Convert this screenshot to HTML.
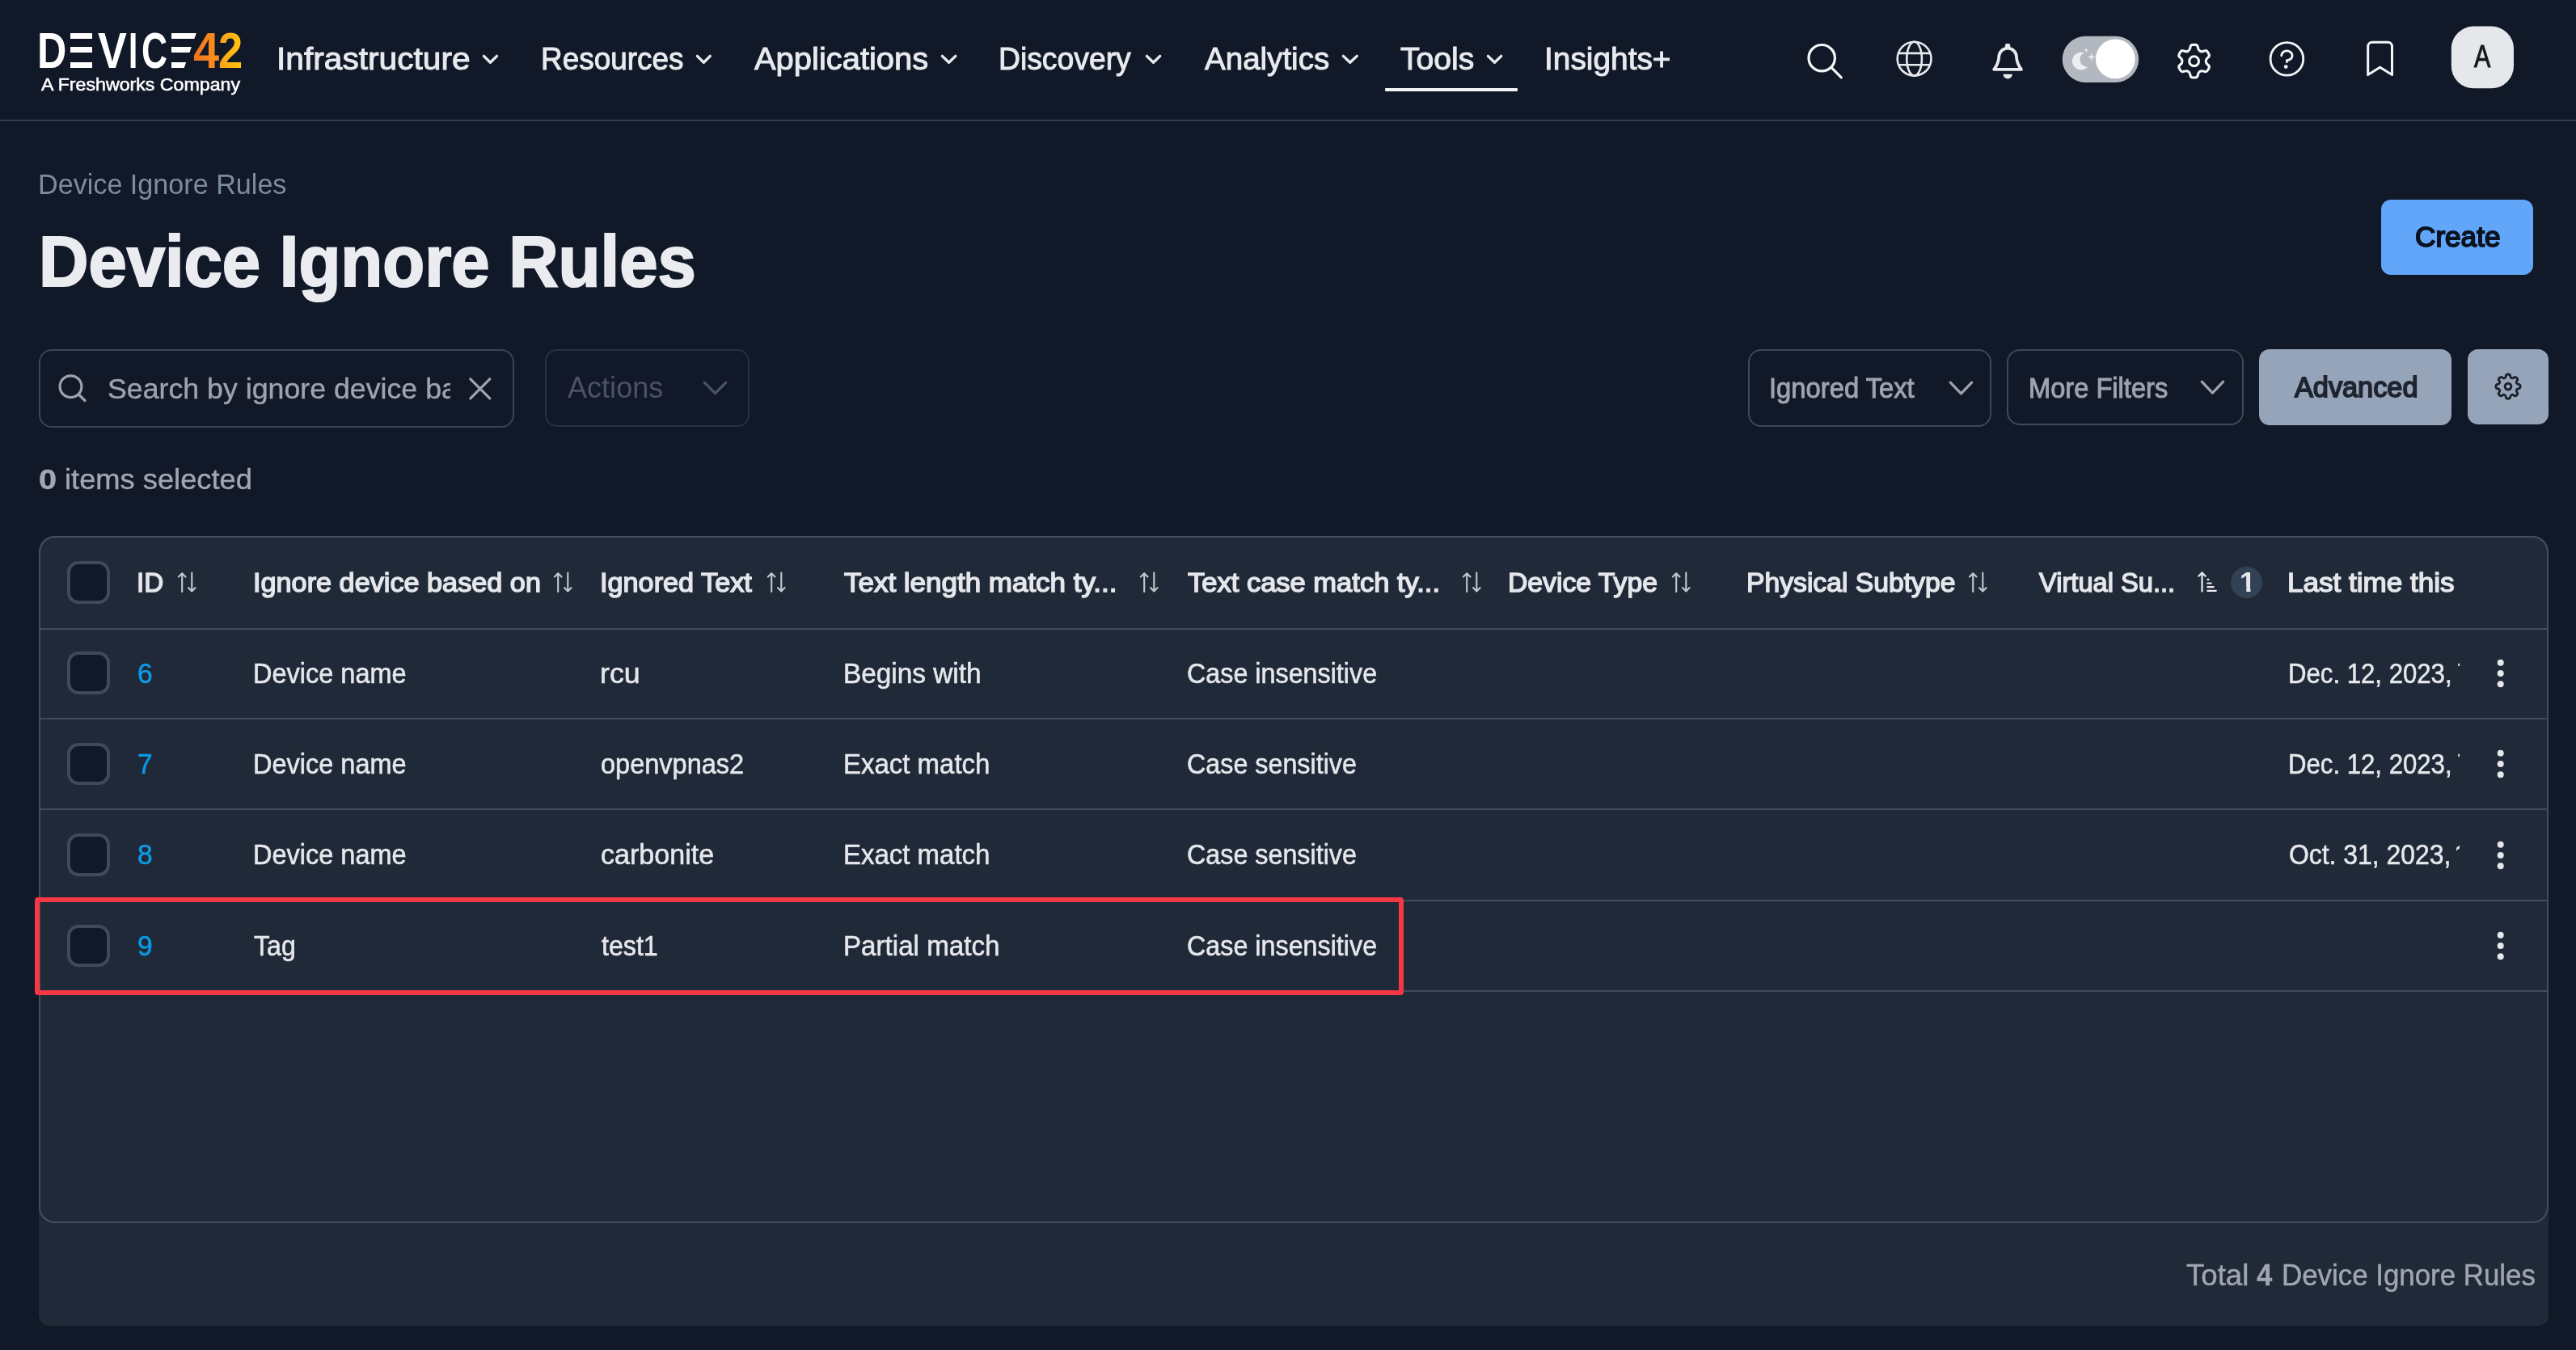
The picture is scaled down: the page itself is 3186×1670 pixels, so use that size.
<!DOCTYPE html>
<html lang="en"><head><meta charset="utf-8"><title>Device Ignore Rules</title>
<style>
html,body{margin:0;padding:0;background:#111827;}
body{width:3186px;height:1670px;position:relative;overflow:hidden;font-family:"Liberation Sans",sans-serif;}
.b{position:absolute;display:block;}
.t{position:absolute;white-space:nowrap;transform-origin:0 50%;}
.clip{position:absolute;overflow:hidden;}
</style>
<script>(function(){var w=window.innerWidth;if(w&&Math.abs(w-3186)>2){document.documentElement.style.zoom=w/3186;}})();</script>
</head><body>
<div class="b" style="left:0px;top:148px;width:3186px;height:2.2px;background:#363d4c"></div>
<div class="b" style="left:1712.8px;top:108.8px;width:164.4px;height:4.2px;background:#f3f4f6;border-radius:1px"></div>
<svg class="b" style="left:595.3px;top:66.39999999999999px" width="22.9" height="15.200000000000012" viewBox="-2.2 -2.2 22.9 15.200000000000012"><polyline points="1.19,1.19 9.25,9.10 17.31,1.19" fill="none" stroke="#e8eaee" stroke-width="3.4" stroke-linecap="round" stroke-linejoin="round"/></svg>
<svg class="b" style="left:858.8px;top:66.39999999999999px" width="22.699999999999953" height="15.200000000000012" viewBox="-2.2 -2.2 22.699999999999953 15.200000000000012"><polyline points="1.19,1.19 9.15,9.10 17.11,1.19" fill="none" stroke="#e8eaee" stroke-width="3.4" stroke-linecap="round" stroke-linejoin="round"/></svg>
<svg class="b" style="left:1161.6px;top:66.39999999999999px" width="23.199999999999953" height="15.200000000000012" viewBox="-2.2 -2.2 23.199999999999953 15.200000000000012"><polyline points="1.19,1.19 9.40,9.10 17.61,1.19" fill="none" stroke="#e8eaee" stroke-width="3.4" stroke-linecap="round" stroke-linejoin="round"/></svg>
<svg class="b" style="left:1415.1px;top:66.39999999999999px" width="23.100000000000044" height="15.200000000000012" viewBox="-2.2 -2.2 23.100000000000044 15.200000000000012"><polyline points="1.19,1.19 9.35,9.10 17.51,1.19" fill="none" stroke="#e8eaee" stroke-width="3.4" stroke-linecap="round" stroke-linejoin="round"/></svg>
<svg class="b" style="left:1658.0px;top:66.39999999999999px" width="23.600000000000044" height="15.200000000000012" viewBox="-2.2 -2.2 23.600000000000044 15.200000000000012"><polyline points="1.19,1.19 9.60,9.10 18.01,1.19" fill="none" stroke="#e8eaee" stroke-width="3.4" stroke-linecap="round" stroke-linejoin="round"/></svg>
<svg class="b" style="left:1837.1px;top:66.39999999999999px" width="23.100000000000044" height="15.200000000000012" viewBox="-2.2 -2.2 23.100000000000044 15.200000000000012"><polyline points="1.19,1.19 9.35,9.10 17.51,1.19" fill="none" stroke="#e8eaee" stroke-width="3.4" stroke-linecap="round" stroke-linejoin="round"/></svg>
<div class="b" style="left:0;top:0;width:320px;height:130px;font-weight:700;color:#fff"><span class="t" style="left:46.17px;top:22.70px;font-size:62.3px;line-height:80px;transform:scaleX(0.8077);">D</span><span class="clip" style="left:87.20px;top:22.70px;width:26.70px;height:80px;"><span class="t" style="left:-16.48px;top:0;font-size:62.3px;line-height:80px;transform:scaleX(1.2027)">E</span></span><span class="t" style="left:120.70px;top:22.70px;font-size:62.3px;line-height:80px;transform:scaleX(0.8619);">V</span><span class="t" style="left:159.00px;top:22.70px;font-size:62.3px;line-height:80px;transform:scaleX(0.6500);">I</span><span class="t" style="left:174.88px;top:22.70px;font-size:62.3px;line-height:80px;transform:scaleX(0.7095);">C</span><span class="clip" style="left:211.90px;top:22.70px;width:34.10px;height:80px;clip-path:polygon(0.00px 7.30px,34.80px 7.30px,15.10px 63.30px,0.00px 63.30px);"><span class="t" style="left:-21.04px;top:0;font-size:62.3px;line-height:80px;transform:scaleX(1.5360)">E</span></span><span class="t" style="left:238.60px;top:22.40px;font-size:63.199999999999996px;line-height:80px;transform:scaleX(0.9143);background:linear-gradient(90deg,#f2701f 0%,#f7941d 100%);-webkit-background-clip:text;background-clip:text;color:transparent;">4</span><span class="t" style="left:270.48px;top:22.40px;font-size:63.199999999999996px;line-height:80px;transform:scaleX(0.8613);background:linear-gradient(90deg,#f9a01b 0%,#ffc60f 100%);-webkit-background-clip:text;background-clip:text;color:transparent;">2</span></div>
<div class="b" style="left:2945px;top:247px;width:188px;height:93.3px;background:#62a6fa;border-radius:12px"></div>
<div class="b" style="left:48px;top:431.5px;width:588px;height:97.5px;border:2px solid #3a4555;border-radius:16px;box-sizing:border-box"></div>
<div class="b" style="left:674px;top:432px;width:253.2px;height:96px;border:2px solid #283142;border-radius:15px;box-sizing:border-box"></div>
<div class="b" style="left:2162px;top:432px;width:301.4px;height:96px;border:2px solid #3e4857;border-radius:16px;box-sizing:border-box"></div>
<div class="b" style="left:2482px;top:432px;width:293.3px;height:94px;border:2px solid #3e4857;border-radius:16px;box-sizing:border-box"></div>
<div class="b" style="left:2794px;top:432px;width:238px;height:94.2px;background:#96a4b9;border-radius:13px"></div>
<div class="b" style="left:3052px;top:432px;width:100px;height:93px;background:#96a4b9;border-radius:13px"></div>
<svg class="b" style="left:868.1999999999999px;top:469.9px" width="33.100000000000094" height="20.399999999999988" viewBox="-2.1 -2.1 33.100000000000094 20.399999999999988"><polyline points="1.12,1.12 14.45,14.60 27.78,1.12" fill="none" stroke="#4b5263" stroke-width="3.2" stroke-linecap="round" stroke-linejoin="round"/></svg>
<svg class="b" style="left:2408.6px;top:469.59999999999997px" width="32.900000000000276" height="20.50000000000001" viewBox="-2.1 -2.1 32.900000000000276 20.50000000000001"><polyline points="1.12,1.12 14.35,14.70 27.58,1.12" fill="none" stroke="#9ea3af" stroke-width="3.2" stroke-linecap="round" stroke-linejoin="round"/></svg>
<svg class="b" style="left:2720.2000000000003px;top:468.9px" width="32.89999999999982" height="20.800000000000022" viewBox="-2.1 -2.1 32.89999999999982 20.800000000000022"><polyline points="1.12,1.12 14.35,15.00 27.58,1.12" fill="none" stroke="#9ea3af" stroke-width="3.2" stroke-linecap="round" stroke-linejoin="round"/></svg>
<svg class="b" style="left:2200px;top:0" width="986" height="147" viewBox="2200 0 986 147">
<g fill="none" stroke="#f4f5f7" stroke-width="3.2" stroke-linecap="round" stroke-linejoin="round">
<circle cx="2253.2" cy="71.7" r="16.2"/><path d="M2264.9 83.4 L2277.3 95.8"/>
</g>
<g fill="none" stroke="#e8eaee" stroke-width="2.6">
<circle cx="2367.6" cy="72.7" r="20.9"/><ellipse cx="2367.6" cy="72.7" rx="9.3" ry="20.9"/>
<path d="M2347.9 65.9 H2387.3 M2348.1 80.2 H2387.1"/>
</g>
<g fill="none" stroke="#e8eaee" stroke-width="3.7" stroke-linejoin="round" stroke-linecap="round">
<path d="M2466.2 85.9 C2470.2 80.5 2472 75 2472.2 70.6 A10.9 10.9 0 0 1 2494 70.6 C2494.2 75 2496 80.5 2500 85.9 Z"/>
</g>
<circle cx="2483.1" cy="57" r="3.3" fill="#e8eaee"/>
<path d="M2477.5 91.8 A5.7 5.7 0 0 0 2488.9 91.8 Z" fill="#e8eaee"/>
<rect x="2550.7" y="44.8" width="94.4" height="57.1" rx="28.55" fill="#b2b7c0"/>
<circle cx="2616.3" cy="72.9" r="24.4" fill="#ffffff"/>
<path d="M2577.5 65.2 A11 11 0 1 0 2582.4 82.6 A9.2 9.2 0 0 1 2577.5 65.2 Z" fill="#eceef2"/>
<path d="M2580.20 58.50 L2579.49 61.39 L2576.60 62.10 L2579.49 62.81 L2580.20 65.70 L2580.91 62.81 L2583.80 62.10 L2580.91 61.39 Z" fill="#eceef2"/>
<path d="M2586.80 64.70 L2585.69 69.19 L2581.20 70.30 L2585.69 71.41 L2586.80 75.90 L2587.91 71.41 L2592.40 70.30 L2587.91 69.19 Z" fill="#eceef2"/>
<g fill="none" stroke="#f4f5f7" stroke-width="3.1" stroke-linejoin="round">
<path d="M2720.91 63.04 Q2718.90 61.88 2718.42 59.24 L2718.21 58.06 Q2717.73 55.42 2715.04 55.42 L2712.16 55.42 Q2709.47 55.42 2708.99 58.06 L2708.78 59.24 Q2708.30 61.88 2706.29 63.04 L2706.29 63.04 Q2704.29 64.20 2701.75 63.29 L2700.63 62.89 Q2698.10 61.98 2696.75 64.31 L2695.32 66.80 Q2693.97 69.13 2696.02 70.87 L2696.93 71.64 Q2698.98 73.38 2698.98 75.70 L2698.98 75.70 Q2698.98 78.02 2696.93 79.76 L2696.02 80.53 Q2693.97 82.27 2695.32 84.60 L2696.75 87.09 Q2698.10 89.42 2700.63 88.51 L2701.75 88.11 Q2704.29 87.20 2706.29 88.36 L2706.29 88.36 Q2708.30 89.52 2708.78 92.16 L2708.99 93.34 Q2709.47 95.98 2712.16 95.98 L2715.04 95.98 Q2717.73 95.98 2718.21 93.34 L2718.42 92.16 Q2718.90 89.52 2720.91 88.36 L2720.91 88.36 Q2722.91 87.20 2725.45 88.11 L2726.57 88.51 Q2729.10 89.42 2730.45 87.09 L2731.88 84.60 Q2733.23 82.27 2731.18 80.53 L2730.27 79.76 Q2728.22 78.02 2728.22 75.70 L2728.22 75.70 Q2728.22 73.38 2730.27 71.64 L2731.18 70.87 Q2733.23 69.13 2731.88 66.80 L2730.45 64.31 Q2729.10 61.98 2726.57 62.89 L2725.45 63.29 Q2722.91 64.20 2720.91 63.04 Z"/><circle cx="2713.6" cy="75.7" r="5.9"/>
</g>
<g fill="none" stroke="#f4f5f7" stroke-width="2.8" stroke-linecap="round" stroke-linejoin="round">
<circle cx="2828.4" cy="72.9" r="20.3"/>
<path d="M2828.40 76.66 V74.57 C2832.16 74.57 2835.08 71.96 2835.08 68.73 S2832.09 62.88 2828.40 62.88 S2821.72 65.49 2821.72 68.73"/>
</g>
<circle cx="2827.2000000000003" cy="82.6" r="2.4" fill="#f4f5f7"/>
<g fill="none" stroke="#f4f5f7" stroke-width="3" stroke-linejoin="round" stroke-linecap="round">
<path d="M2928.7 92.6 V57.3 A5 5 0 0 1 2933.7 52.3 H2953.5 A5 5 0 0 1 2958.5 57.3 V92.6 L2943.6 83.2 Z"/>
</g>
<rect x="3031.8" y="32.6" width="77.2" height="76.7" rx="27.5" fill="#e5e7eb"/>
</svg>
<svg class="b" style="left:60px;top:450px" width="560" height="60" viewBox="60 450 560 60">
<g fill="none" stroke="#9ea3af" stroke-width="3.2" stroke-linecap="round">
<circle cx="87.5" cy="478.2" r="13.4"/><path d="M97.3 488 L105 495.5"/>
<path d="M581.8 468.8 L605.8 492.8 M605.8 468.8 L581.8 492.8"/>
</g></svg>
<svg class="b" style="left:3080px;top:455px" width="46" height="46" viewBox="3080 455 46 46">
<g fill="none" stroke="#1c222c" stroke-width="2.9" stroke-linejoin="round">
<path d="M3106.32 467.67 Q3104.85 467.06 3104.69 465.04 L3104.69 465.04 Q3104.53 463.01 3102.00 463.01 L3102.00 463.01 Q3099.47 463.01 3099.31 465.04 L3099.31 465.04 Q3099.15 467.06 3097.68 467.67 L3097.68 467.67 Q3096.21 468.28 3094.66 466.96 L3094.66 466.96 Q3093.12 465.64 3091.33 467.43 L3091.33 467.43 Q3089.54 469.22 3090.86 470.76 L3090.86 470.76 Q3092.18 472.31 3091.57 473.78 L3091.57 473.78 Q3090.96 475.25 3088.94 475.41 L3088.94 475.41 Q3086.91 475.57 3086.91 478.10 L3086.91 478.10 Q3086.91 480.63 3088.94 480.79 L3088.94 480.79 Q3090.96 480.95 3091.57 482.42 L3091.57 482.42 Q3092.18 483.89 3090.86 485.44 L3090.86 485.44 Q3089.54 486.98 3091.33 488.77 L3091.33 488.77 Q3093.12 490.56 3094.66 489.24 L3094.66 489.24 Q3096.21 487.92 3097.68 488.53 L3097.68 488.53 Q3099.15 489.14 3099.31 491.16 L3099.31 491.16 Q3099.47 493.19 3102.00 493.19 L3102.00 493.19 Q3104.53 493.19 3104.69 491.16 L3104.69 491.16 Q3104.85 489.14 3106.32 488.53 L3106.32 488.53 Q3107.79 487.92 3109.34 489.24 L3109.34 489.24 Q3110.88 490.56 3112.67 488.77 L3112.67 488.77 Q3114.46 486.98 3113.14 485.44 L3113.14 485.44 Q3111.82 483.89 3112.43 482.42 L3112.43 482.42 Q3113.04 480.95 3115.06 480.79 L3115.06 480.79 Q3117.09 480.63 3117.09 478.10 L3117.09 478.10 Q3117.09 475.57 3115.06 475.41 L3115.06 475.41 Q3113.04 475.25 3112.43 473.78 L3112.43 473.78 Q3111.82 472.31 3113.14 470.76 L3113.14 470.76 Q3114.46 469.22 3112.67 467.43 L3112.67 467.43 Q3110.88 465.64 3109.34 466.96 L3109.34 466.96 Q3107.79 468.28 3106.32 467.67 Z"/><circle cx="3102" cy="478.1" r="3.9"/>
</g></svg>
<div class="b" style="left:48px;top:663px;width:3104px;height:976.5px;background:#1f2937;border-radius:20px 20px 13px 13px"></div>
<div class="b" style="left:48px;top:663px;width:3104px;height:849.5px;border:2px solid #444e5d;border-radius:20px;box-sizing:border-box"></div>
<div class="b" style="left:50px;top:776.6px;width:3100px;height:2px;background:#414b5a"></div>
<div class="b" style="left:50px;top:888.3px;width:3100px;height:2px;background:#414b5a"></div>
<div class="b" style="left:50px;top:1000.3px;width:3100px;height:2px;background:#414b5a"></div>
<div class="b" style="left:50px;top:1112.7px;width:3100px;height:2px;background:#414b5a"></div>
<div class="b" style="left:50px;top:1224.7px;width:3100px;height:2px;background:#414b5a"></div>
<div class="b" style="left:83.3px;top:694.3px;width:52.4px;height:52.4px;background:#111827;border:4px solid #3f4959;border-radius:14px;box-sizing:border-box"></div>
<div class="b" style="left:83.3px;top:806.3px;width:52.4px;height:52.4px;background:#111827;border:4px solid #3f4959;border-radius:14px;box-sizing:border-box"></div>
<div class="b" style="left:83.3px;top:918.8px;width:52.4px;height:52.4px;background:#111827;border:4px solid #3f4959;border-radius:14px;box-sizing:border-box"></div>
<div class="b" style="left:83.3px;top:1031.3px;width:52.4px;height:52.4px;background:#111827;border:4px solid #3f4959;border-radius:14px;box-sizing:border-box"></div>
<div class="b" style="left:83.3px;top:1143.8px;width:52.4px;height:52.4px;background:#111827;border:4px solid #3f4959;border-radius:14px;box-sizing:border-box"></div>
<div class="b" style="left:2759px;top:700.6px;width:39px;height:39px;background:#334155;border-radius:50%"></div>
<svg class="b" style="left:3086px;top:812.5px" width="14" height="40" viewBox="0 0 14 40"><circle cx="6.7" cy="6.7" r="4" fill="#e5e7eb"/><circle cx="6.7" cy="20" r="4" fill="#e5e7eb"/><circle cx="6.7" cy="33.3" r="4" fill="#e5e7eb"/></svg>
<svg class="b" style="left:3086px;top:925px" width="14" height="40" viewBox="0 0 14 40"><circle cx="6.7" cy="6.7" r="4" fill="#e5e7eb"/><circle cx="6.7" cy="20" r="4" fill="#e5e7eb"/><circle cx="6.7" cy="33.3" r="4" fill="#e5e7eb"/></svg>
<svg class="b" style="left:3086px;top:1037.5px" width="14" height="40" viewBox="0 0 14 40"><circle cx="6.7" cy="6.7" r="4" fill="#e5e7eb"/><circle cx="6.7" cy="20" r="4" fill="#e5e7eb"/><circle cx="6.7" cy="33.3" r="4" fill="#e5e7eb"/></svg>
<svg class="b" style="left:3086px;top:1150px" width="14" height="40" viewBox="0 0 14 40"><circle cx="6.7" cy="6.7" r="4" fill="#e5e7eb"/><circle cx="6.7" cy="20" r="4" fill="#e5e7eb"/><circle cx="6.7" cy="33.3" r="4" fill="#e5e7eb"/></svg>
<svg class="b" style="left:218.8px;top:706.7px" width="25" height="27" viewBox="-1 -1 25 27"><g fill="none" stroke="#c3c7ce" stroke-width="2.1" stroke-linecap="round" stroke-linejoin="round"><path d="M5.2 24 V1.2 M0.9 5.6 L5.2 1.2 L9.5 5.6"/><path d="M17.3 0.6 V23.4 M13 19 L17.3 23.4 L21.6 19"/></g></svg>
<svg class="b" style="left:684px;top:706.7px" width="25" height="27" viewBox="-1 -1 25 27"><g fill="none" stroke="#c3c7ce" stroke-width="2.1" stroke-linecap="round" stroke-linejoin="round"><path d="M5.2 24 V1.2 M0.9 5.6 L5.2 1.2 L9.5 5.6"/><path d="M17.3 0.6 V23.4 M13 19 L17.3 23.4 L21.6 19"/></g></svg>
<svg class="b" style="left:948px;top:706.7px" width="25" height="27" viewBox="-1 -1 25 27"><g fill="none" stroke="#c3c7ce" stroke-width="2.1" stroke-linecap="round" stroke-linejoin="round"><path d="M5.2 24 V1.2 M0.9 5.6 L5.2 1.2 L9.5 5.6"/><path d="M17.3 0.6 V23.4 M13 19 L17.3 23.4 L21.6 19"/></g></svg>
<svg class="b" style="left:1409px;top:706.7px" width="25" height="27" viewBox="-1 -1 25 27"><g fill="none" stroke="#c3c7ce" stroke-width="2.1" stroke-linecap="round" stroke-linejoin="round"><path d="M5.2 24 V1.2 M0.9 5.6 L5.2 1.2 L9.5 5.6"/><path d="M17.3 0.6 V23.4 M13 19 L17.3 23.4 L21.6 19"/></g></svg>
<svg class="b" style="left:1807.5px;top:706.7px" width="25" height="27" viewBox="-1 -1 25 27"><g fill="none" stroke="#c3c7ce" stroke-width="2.1" stroke-linecap="round" stroke-linejoin="round"><path d="M5.2 24 V1.2 M0.9 5.6 L5.2 1.2 L9.5 5.6"/><path d="M17.3 0.6 V23.4 M13 19 L17.3 23.4 L21.6 19"/></g></svg>
<svg class="b" style="left:2066.6px;top:706.7px" width="25" height="27" viewBox="-1 -1 25 27"><g fill="none" stroke="#c3c7ce" stroke-width="2.1" stroke-linecap="round" stroke-linejoin="round"><path d="M5.2 24 V1.2 M0.9 5.6 L5.2 1.2 L9.5 5.6"/><path d="M17.3 0.6 V23.4 M13 19 L17.3 23.4 L21.6 19"/></g></svg>
<svg class="b" style="left:2434px;top:706.7px" width="25" height="27" viewBox="-1 -1 25 27"><g fill="none" stroke="#c3c7ce" stroke-width="2.1" stroke-linecap="round" stroke-linejoin="round"><path d="M5.2 24 V1.2 M0.9 5.6 L5.2 1.2 L9.5 5.6"/><path d="M17.3 0.6 V23.4 M13 19 L17.3 23.4 L21.6 19"/></g></svg>
<svg class="b" style="left:2714px;top:704px" width="32" height="32" viewBox="2714 704 32 32"><g fill="none" stroke="#e8eaee" stroke-width="2.2" stroke-linecap="round" stroke-linejoin="round"><path d="M2723.5 731.6 V708.4 M2719.3 712.7 L2723.5 708.4 L2727.7 712.7"/><path d="M2730.3 716.8 H2731.6 M2730.3 721.5 H2734.7 M2730.3 726.1 H2737.7 M2730.3 730.8 H2740.8"/></g></svg>
<div class="b" style="left:43px;top:1110px;width:1692.5px;height:121.3px;border:6.4px solid #f73746;border-radius:4px;box-sizing:border-box"></div>
<span class="t" style="left:341.89px;top:47.90px;font-size:39.2px;line-height:49px;color:#e8eaee;transform:scaleX(1.0380);-webkit-text-stroke:1.0px #e8eaee;">Infrastructure</span>
<span class="t" style="left:668.57px;top:47.90px;font-size:39.2px;line-height:49px;color:#e8eaee;transform:scaleX(0.9422);-webkit-text-stroke:1.0px #e8eaee;">Resources</span>
<span class="t" style="left:932.80px;top:47.90px;font-size:39.2px;line-height:49px;color:#e8eaee;transform:scaleX(1.0185);-webkit-text-stroke:1.0px #e8eaee;">Applications</span>
<span class="t" style="left:1234.65px;top:47.90px;font-size:39.2px;line-height:49px;color:#e8eaee;transform:scaleX(0.9516);-webkit-text-stroke:1.0px #e8eaee;">Discovery</span>
<span class="t" style="left:1489.60px;top:47.90px;font-size:39.2px;line-height:49px;color:#e8eaee;transform:scaleX(0.9833);-webkit-text-stroke:1.0px #e8eaee;">Analytics</span>
<span class="t" style="left:1732.20px;top:47.90px;font-size:39.2px;line-height:49px;color:#e8eaee;transform:scaleX(0.9979);-webkit-text-stroke:1.0px #e8eaee;">Tools</span>
<span class="t" style="left:1909.63px;top:47.90px;font-size:39.2px;line-height:49px;color:#e8eaee;transform:scaleX(0.9912);-webkit-text-stroke:1.0px #e8eaee;">Insights+</span>
<span class="t" style="left:51.00px;top:90.30px;font-size:22.8px;line-height:29px;color:#ffffff;transform:scaleX(1.0170);-webkit-text-stroke:0.55px #ffffff;">A Freshworks Company</span>
<span class="t" style="left:3060.00px;top:45.60px;font-size:38.2px;line-height:48px;color:#16181d;transform:scaleX(0.7969);-webkit-text-stroke:1.0px #16181d;">A</span>
<span class="t" style="left:47.28px;top:205.80px;font-size:35.5px;line-height:45px;color:#7b8d9c;transform:scaleX(0.9618);">Device Ignore Rules</span>
<span class="t" style="left:48.12px;top:266.50px;font-size:89.8px;line-height:113px;color:#ebecf0;transform:scaleX(0.9468);-webkit-text-stroke:2.2px #ebecf0;font-weight:700;">Device Ignore Rules</span>
<span class="t" style="left:2986.58px;top:270.70px;font-size:34.6px;line-height:44px;color:#0b1220;transform:scaleX(1.0162);-webkit-text-stroke:1.8px #0b1220;">Create</span>
<div class="clip" style="left:132.30px;top:458.40px;width:424.70px;height:45px;"><span class="t" style="left:0.99px;top:0;font-size:35.3px;line-height:45px;color:#9ea3af;transform:scaleX(1.0120);-webkit-text-stroke:0.4px #9ea3af;">Search by ignore device based on</span></div>
<span class="t" style="left:701.90px;top:457.00px;font-size:36px;line-height:45px;color:#4b5263;transform:scaleX(1.0021);">Actions</span>
<span class="t" style="left:2187.53px;top:458.70px;font-size:34.3px;line-height:43px;color:#9ea3af;transform:scaleX(0.9553);-webkit-text-stroke:1.0px #9ea3af;">Ignored Text</span>
<span class="t" style="left:2508.90px;top:458.70px;font-size:34.3px;line-height:43px;color:#9ea3af;transform:scaleX(0.9512);-webkit-text-stroke:1.0px #9ea3af;">More Filters</span>
<span class="t" style="left:2838.00px;top:456.70px;font-size:34.6px;line-height:44px;color:#1f2530;transform:scaleX(0.9912);-webkit-text-stroke:1.8px #1f2530;">Advanced</span>
<span class="t" style="left:47.78px;top:569.50px;font-size:35.3px;line-height:45px;color:#a3a7b3;transform:scaleX(1.1222);-webkit-text-stroke:0.4px #a3a7b3;font-weight:700;">0</span>
<span class="t" style="left:79.94px;top:569.50px;font-size:35.3px;line-height:45px;color:#a3a7b3;transform:scaleX(1.0281);-webkit-text-stroke:0.4px #a3a7b3;">items selected</span>
<span class="t" style="left:169.07px;top:698.70px;font-size:34px;line-height:43px;color:#e5e7eb;transform:scaleX(0.9762);-webkit-text-stroke:1.5px #e5e7eb;">ID</span>
<span class="t" style="left:312.98px;top:698.70px;font-size:34px;line-height:43px;color:#e5e7eb;transform:scaleX(1.0070);-webkit-text-stroke:1.5px #e5e7eb;">Ignore device based on</span>
<span class="t" style="left:741.98px;top:698.70px;font-size:34px;line-height:43px;color:#e5e7eb;transform:scaleX(1.0072);-webkit-text-stroke:1.5px #e5e7eb;">Ignored Text</span>
<span class="t" style="left:1044.00px;top:698.70px;font-size:34px;line-height:43px;color:#e5e7eb;transform:scaleX(1.0284);-webkit-text-stroke:1.5px #e5e7eb;">Text length match ty...</span>
<span class="t" style="left:1468.50px;top:698.70px;font-size:34px;line-height:43px;color:#e5e7eb;transform:scaleX(1.0150);-webkit-text-stroke:1.5px #e5e7eb;">Text case match ty...</span>
<span class="t" style="left:1865.02px;top:698.70px;font-size:34px;line-height:43px;color:#e5e7eb;transform:scaleX(0.9915);-webkit-text-stroke:1.5px #e5e7eb;">Device Type</span>
<span class="t" style="left:2160.02px;top:698.70px;font-size:34px;line-height:43px;color:#e5e7eb;transform:scaleX(0.9907);-webkit-text-stroke:1.5px #e5e7eb;">Physical Subtype</span>
<span class="t" style="left:2521.60px;top:698.70px;font-size:34px;line-height:43px;color:#e5e7eb;transform:scaleX(0.9602);-webkit-text-stroke:1.5px #e5e7eb;">Virtual Su...</span>
<span class="t" style="left:2829.44px;top:698.70px;font-size:34px;line-height:43px;color:#e5e7eb;transform:scaleX(1.0314);-webkit-text-stroke:1.5px #e5e7eb;">Last time this</span>
<span class="t" style="left:169.52px;top:811.70px;font-size:34.2px;line-height:43px;color:#0c9ae8;transform:scaleX(0.9824);-webkit-text-stroke:0.55px #0c9ae8;">6</span>
<span class="t" style="left:313.00px;top:811.70px;font-size:34.2px;line-height:43px;color:#e5e7eb;transform:scaleX(0.9506);-webkit-text-stroke:0.55px #e5e7eb;">Device name</span>
<span class="t" style="left:741.71px;top:811.70px;font-size:34.2px;line-height:43px;color:#e5e7eb;transform:scaleX(1.0442);-webkit-text-stroke:0.55px #e5e7eb;">rcu</span>
<span class="t" style="left:1042.75px;top:811.70px;font-size:34.2px;line-height:43px;color:#e5e7eb;transform:scaleX(0.9753);-webkit-text-stroke:0.55px #e5e7eb;">Begins with</span>
<span class="t" style="left:1467.86px;top:811.70px;font-size:34.2px;line-height:43px;color:#e5e7eb;transform:scaleX(0.9445);-webkit-text-stroke:0.55px #e5e7eb;">Case insensitive</span>
<div class="clip" style="left:2830.00px;top:811.70px;width:212.30px;height:43px;"><span class="t" style="left:0.18px;top:0;font-size:34.2px;line-height:43px;color:#e5e7eb;transform:scaleX(0.9111);-webkit-text-stroke:0.55px #e5e7eb;">Dec. 12, 2023,<span style="margin-left:-2.6px"> 7:12 p.m.</span></span></div>
<span class="t" style="left:169.52px;top:923.90px;font-size:34.2px;line-height:43px;color:#0c9ae8;transform:scaleX(0.9824);-webkit-text-stroke:0.55px #0c9ae8;">7</span>
<span class="t" style="left:313.00px;top:923.90px;font-size:34.2px;line-height:43px;color:#e5e7eb;transform:scaleX(0.9506);-webkit-text-stroke:0.55px #e5e7eb;">Device name</span>
<span class="t" style="left:742.85px;top:923.90px;font-size:34.2px;line-height:43px;color:#e5e7eb;transform:scaleX(0.9507);-webkit-text-stroke:0.55px #e5e7eb;">openvpnas2</span>
<span class="t" style="left:1042.77px;top:923.90px;font-size:34.2px;line-height:43px;color:#e5e7eb;transform:scaleX(0.9642);-webkit-text-stroke:0.55px #e5e7eb;">Exact match</span>
<span class="t" style="left:1467.86px;top:923.90px;font-size:34.2px;line-height:43px;color:#e5e7eb;transform:scaleX(0.9441);-webkit-text-stroke:0.55px #e5e7eb;">Case sensitive</span>
<div class="clip" style="left:2830.00px;top:923.90px;width:212.30px;height:43px;"><span class="t" style="left:0.18px;top:0;font-size:34.2px;line-height:43px;color:#e5e7eb;transform:scaleX(0.9111);-webkit-text-stroke:0.55px #e5e7eb;">Dec. 12, 2023,<span style="margin-left:-2.6px"> 7:12 p.m.</span></span></div>
<span class="t" style="left:169.52px;top:1036.00px;font-size:34.2px;line-height:43px;color:#0c9ae8;transform:scaleX(0.9824);-webkit-text-stroke:0.55px #0c9ae8;">8</span>
<span class="t" style="left:313.00px;top:1036.00px;font-size:34.2px;line-height:43px;color:#e5e7eb;transform:scaleX(0.9506);-webkit-text-stroke:0.55px #e5e7eb;">Device name</span>
<span class="t" style="left:742.80px;top:1036.00px;font-size:34.2px;line-height:43px;color:#e5e7eb;transform:scaleX(0.9969);-webkit-text-stroke:0.55px #e5e7eb;">carbonite</span>
<span class="t" style="left:1042.77px;top:1036.00px;font-size:34.2px;line-height:43px;color:#e5e7eb;transform:scaleX(0.9642);-webkit-text-stroke:0.55px #e5e7eb;">Exact match</span>
<span class="t" style="left:1467.86px;top:1036.00px;font-size:34.2px;line-height:43px;color:#e5e7eb;transform:scaleX(0.9441);-webkit-text-stroke:0.55px #e5e7eb;">Case sensitive</span>
<div class="clip" style="left:2830.00px;top:1036.00px;width:212.30px;height:43px;clip-path:polygon(0 0,100% 0,100% 58%,calc(100% - 7px) 58%,calc(100% - 7px) 100%,0 100%);"><span class="t" style="left:1.07px;top:0;font-size:34.2px;line-height:43px;color:#e5e7eb;transform:scaleX(0.9330);-webkit-text-stroke:0.55px #e5e7eb;">Oct. 31, 2023,<span style="margin-left:-5.4px"> 1:40 p.m.</span></span></div>
<span class="t" style="left:169.52px;top:1148.50px;font-size:34.2px;line-height:43px;color:#0c9ae8;transform:scaleX(0.9824);-webkit-text-stroke:0.55px #0c9ae8;">9</span>
<span class="t" style="left:313.70px;top:1148.50px;font-size:34.2px;line-height:43px;color:#e5e7eb;transform:scaleX(0.9396);-webkit-text-stroke:0.55px #e5e7eb;">Tag</span>
<span class="t" style="left:743.80px;top:1148.50px;font-size:34.2px;line-height:43px;color:#e5e7eb;transform:scaleX(0.9411);-webkit-text-stroke:0.55px #e5e7eb;">test1</span>
<span class="t" style="left:1042.76px;top:1148.50px;font-size:34.2px;line-height:43px;color:#e5e7eb;transform:scaleX(0.9699);-webkit-text-stroke:0.55px #e5e7eb;">Partial match</span>
<span class="t" style="left:1467.86px;top:1148.50px;font-size:34.2px;line-height:43px;color:#e5e7eb;transform:scaleX(0.9445);-webkit-text-stroke:0.55px #e5e7eb;">Case insensitive</span>
<span class="t" style="left:2703.70px;top:1554.70px;font-size:36.3px;line-height:46px;color:#a1a5b1;transform:scaleX(1.0093);-webkit-text-stroke:0.45px #a1a5b1;">Total</span>
<span class="t" style="left:2791.00px;top:1554.70px;font-size:36.3px;line-height:46px;color:#a1a5b1;transform:scaleX(0.9548);-webkit-text-stroke:0.3px #a1a5b1;font-weight:700;">4</span>
<span class="t" style="left:2821.58px;top:1554.70px;font-size:36.3px;line-height:46px;color:#a1a5b1;transform:scaleX(0.9605);-webkit-text-stroke:0.45px #a1a5b1;">Device Ignore Rules</span>
<span class="clip" style="left:2771.0px;top:697.70px;width:12.50px;height:44px;clip-path:polygon(0 0,100% 0,100% 100%,7.30px 100%,7.30px 62%,0 62%)"><span class="t" style="left:-0.86px;top:0;font-size:35.2px;line-height:44px;color:#e5e7eb;font-weight:700;transform:scaleX(0.999)">1</span></span>
</body></html>
